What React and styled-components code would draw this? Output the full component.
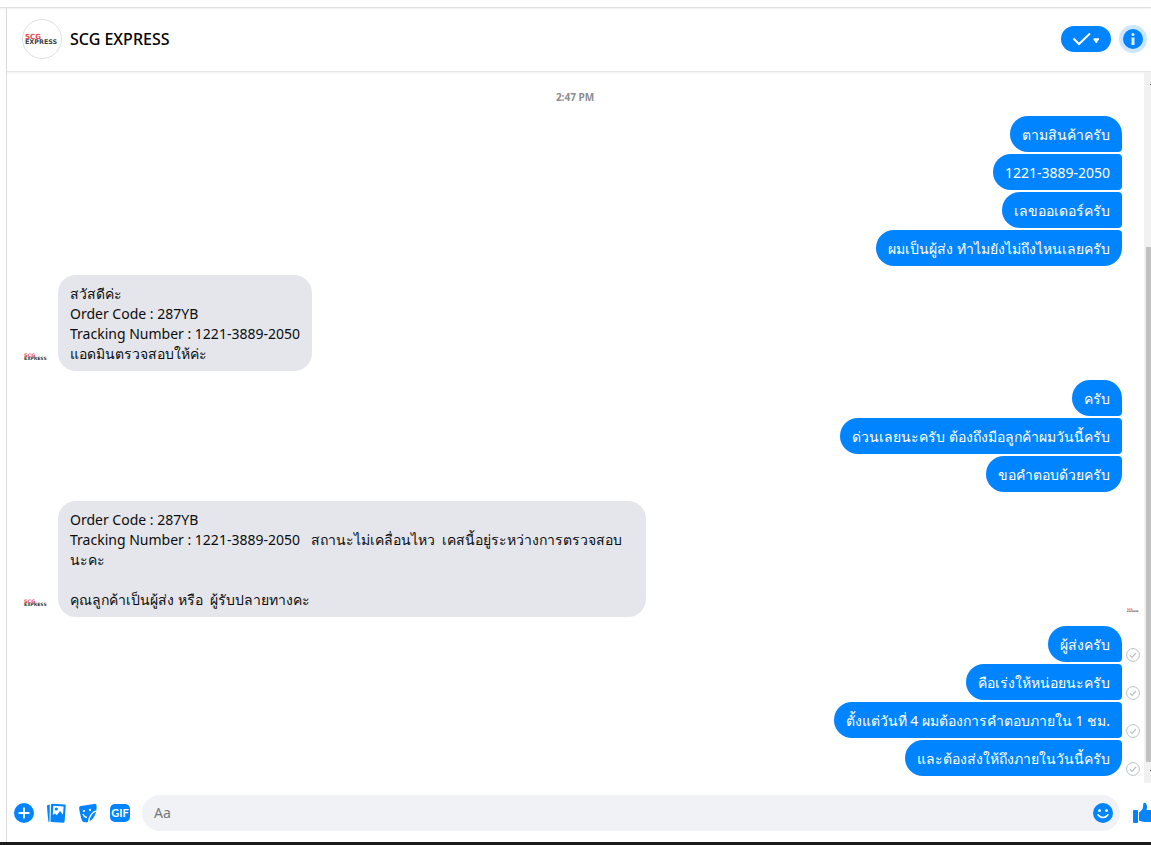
import React, { useState } from 'react'
import styled, { createGlobalStyle } from 'styled-components'

const GlobalStyle = createGlobalStyle`
	* {
		box-sizing: border-box;
	}

	body {
		margin: 0;
		background-color: #ffffff;
		color: #0c0d0e;
		font-family: 'Noto Sans', 'Open Sans', sans-serif;
		font-size: 14px;
	}

	button {
		border: 0;
		padding: 0;
		background: none;
		color: #0084ff;
		cursor: pointer;
	}

	svg {
		display: block;
	}
`

const Page = styled.div`
	min-height: 100vh;
	display: flex;
	flex-direction: column;
	border-bottom: 3px solid #1c1c1c;
`

const TopStrip = styled.div`
	height: 8px;
	border-bottom: 1px solid #e2e2e2;
	box-shadow: 0 1px 2px rgba(0, 0, 0, 0.06);
`

const Chat = styled.main`
	flex: 1;
	display: flex;
	flex-direction: column;
	margin-left: 6px;
	border-left: 1px solid #dddddd;
`

const Header = styled.header`
	height: 64px;
	display: flex;
	align-items: center;
	gap: 8px;
	padding: 0 4px 1px 15px;
	border-bottom: 1px solid #e6e6e6;
	box-shadow: 0 1px 2px rgba(0, 0, 0, 0.06);
`

const Title = styled.h1`
	flex: 1;
	margin: 0;
	color: #000000;
	font-size: 16px;
	font-weight: 500;
`

const DoneButton = styled.button`
	width: 50px;
	height: 26px;
	border-radius: 13px;
	background-color: #0084ff;
`

const InfoButton = styled.button`
	width: 28px;
	height: 28px;
	border-radius: 50%;
`

const Conversation = styled.section`
	flex: 1;
	display: flex;
`

const Messages = styled.div`
	flex: 1;
	display: flex;
	flex-direction: column;
	gap: 9px;
	padding: 15px 0 7px 15px;
`

const Time = styled.time`
	height: 20px;
	margin-right: 16px;
	color: #8a8d91;
	font-size: 10px;
	font-weight: 700;
	line-height: 20px;
	text-align: center;
`

const Group = styled.div`
	display: flex;
	flex-direction: column;
	gap: 2px;
`

const Row = styled.div`
	display: flex;
	align-items: flex-end;
	justify-content: ${({ $sent }) => ($sent ? 'flex-end' : 'flex-start')};
	gap: ${({ $sent }) => ($sent ? '4px' : '8px')};
`

const Bubble = styled.p`
	max-width: 588px;
	margin: 0;
	padding: 9px 12px 7px;
	border-radius: 18px;
	background-color: #e4e6eb;
	line-height: 20px;
	white-space: pre-wrap;
`

const SentBubble = styled(Bubble)`
	border-radius: ${({ $first, $last }) =>
		`18px ${$first ? 18 : 4}px ${$last ? 18 : 4}px 18px`};
	background-color: #0084ff;
	color: #ffffff;
`

const Status = styled.span`
	width: 18px;
	margin-left: ${({ $push }) => ($push ? 'auto' : '0')};
`

const Scrollbar = styled.div`
	width: 7px;
	display: flex;
	flex-direction: column;
	padding: 12px 0;
	background-color: #f1f1f1;

	&::before,
	&::after {
		content: '';
		width: 1px;
		height: 1px;
		align-self: flex-end;
		background-color: #505050;
	}
`

const Thumb = styled.div`
	height: 75%;
	margin: auto 0 8px 2px;
	background-color: #c1c1c1;
`

const Composer = styled.form`
	height: 59px;
	display: flex;
	align-items: center;
	gap: 12px;
	padding-left: 7px;
`

const IconButton = styled.button`
	width: 20px;
	height: 20px;
`

const LikeButton = styled(IconButton)`
	width: 19px;
	height: 22px;
	overflow: hidden;
`

const Field = styled.div`
	flex: 1;
	height: 36px;
	display: flex;
	align-items: center;
	padding: 0 7px 0 12px;
	border-radius: 18px;
	background-color: #f0f2f5;
`

const TextInput = styled.input`
	flex: 1;
	min-width: 0;
	padding: 0;
	border: 0;
	outline: 0;
	background: none;
	font-family: inherit;
	font-size: 14px;

	&::placeholder {
		color: #75787d;
	}
`

const Logo = ({ size, ring }) => (
	<svg width={size} height={size} viewBox='0 0 40 40' role='img' aria-label='SCG Express'>
		{ring && <circle cx='20' cy='20' r='19.5' fill='#fff' stroke='#dedede' />}
		<text y='19.500' fontFamily='DejaVu Sans' fontWeight='bold' fontSize='7' fill='#e8474c'>
			<tspan x='3'>SCG</tspan>
			<tspan x='3' y='24.800' fontSize='6.400' fill='#444'>
				EXPRESS
			</tspan>
		</text>
	</svg>
)

const CheckCaret = () => (
	<svg width='50' height='26' viewBox='0 0 50 26'>
		<path d='M12.5 12.500l5.500 5.500L29 7.500' fill='none' stroke='#fff' strokeWidth='2' />
		<path d='M32.500 12.300h5.500v1l-2.200 3.700h-1.100l-2.200-3.700z' fill='#fff' />
	</svg>
)

const Info = () => (
	<svg width='28' height='28' viewBox='0 0 28 28'>
		<circle cx='14' cy='14' r='14' fill='#cce6ff' />
		<circle cx='14' cy='14' r='10' fill='#0084ff' />
		<circle cx='14' cy='9.500' r='1.500' fill='#e0f0ff' />
		<path d='M12.500 12.500h3v7.500h-3z' fill='#e0f0ff' />
	</svg>
)

const Delivered = () => (
	<svg width='14' height='14' viewBox='0 0 14 14' fill='none' stroke='#bcc0c4'>
		<circle cx='7' cy='7' r='6.400' />
		<path d='M4 7.300l2 2 4-4.300' strokeWidth='1.200' />
	</svg>
)

const Plus = () => (
	<svg width='20' height='20' viewBox='0 0 20 20'>
		<circle cx='10' cy='10' r='10' fill='#0084ff' />
		<path d='M10 4.500v11M4.500 10h11' stroke='#fff' strokeWidth='1.800' />
	</svg>
)

const Photos = () => (
	<svg width='20' height='20' viewBox='0 0 20 20'>
		<path d='M1 2.200l2.800-.8-.3 17.400-1 .2C1.800 13 1.200 8 1 2.200z' fill='#0084ff' />
		<path d='M6.200.8l12.300.8a1.200 1.200 0 0 1 1.200 1.400l-1.100 15.600a1.300 1.300 0 0 1-1.400 1.200l-11.600-.7a1.200 1.200 0 0 1-1.100-1.300L5 2a1.200 1.200 0 0 1 1.200-1.200z' fill='#0084ff' />
		<path d='M7.300 2.800l10.300.7-.6 8.300-3-3.800-3.300 4.300-1.700-1.700-2.200 1.300z' fill='#fff' />
		<circle cx='10.300' cy='6' r='1.600' fill='#0084ff' />
	</svg>
)

const Sticker = () => (
	<svg width='20' height='20' viewBox='0 0 20 20'>
		<path d='M3 3l13-2.100a2.200 2.200 0 0 1 2.600 2.200c0 2.700-.2 5.200-1 7.500-1.200 3.600-3.600 6.900-7.600 8.400-2 .5-4.700.4-6-1.200-1.100-3.500-2.200-7.600-2.800-12A2.300 2.300 0 0 1 3 3z' fill='#0084ff' />
		<path d='M19 7.700c-4 .6-8.200 5.300-8.500 11.800' fill='none' stroke='#fff' strokeWidth='1.400' />
		<path d='M5 11c.6 2 2 3.200 4 3.300' fill='none' stroke='#fff' strokeWidth='1.300' />
		<circle cx='6' cy='8' r='1.100' fill='#fff' />
		<circle cx='12' cy='6.900' r='1.100' fill='#fff' />
	</svg>
)

const Gif = () => (
	<svg width='20' height='20' viewBox='0 0 20 20'>
		<rect y='1' width='20' height='18' rx='5' fill='#0084ff' />
		<text x='10' y='14' fill='#fff' fontFamily='Lato' fontSize='11' fontWeight='700' textAnchor='middle'>
			GIF
		</text>
	</svg>
)

const Smile = () => (
	<svg width='20' height='20' viewBox='0 0 20 20'>
		<circle cx='10' cy='10' r='10' fill='#0084ff' />
		<circle cx='6.500' cy='7.700' r='1.400' fill='#fff' />
		<circle cx='13.500' cy='7.700' r='1.400' fill='#fff' />
		<path d='M5 11.800c2.500 3.600 7.500 3.600 10 0' fill='none' stroke='#fff' strokeWidth='1.600' strokeLinecap='round' />
	</svg>
)

const Like = () => (
	<svg width='24' height='22' viewBox='0 0 24 22' fill='#0084ff'>
		<rect x='1' y='8' width='5' height='13' rx='1' />
		<path d='M7 10.500c2.400-1.400 3.700-3.200 4-5.500l.2-2.700c.1-1.500 2-2 3-.6 1.200 1.800.9 4.200.2 6.300h6.600c2.500 0 2.700 2.600 1.500 3.300 1 1 .7 2.700-.5 3.100.6 1.200 0 2.500-1.200 2.800.3 1.700-.8 2.800-2.300 2.800h-5.500c-2.500 0-4-.9-6-1.500z' />
	</svg>
)

const groups = [
	{
		sent: true,
		texts: [
			'ตามสินค้าครับ',
			'1221-3889-2050',
			'เลขออเดอร์ครับ',
			'ผมเป็นผู้ส่ง ทำไมยังไม่ถึงไหนเลยครับ'
		]
	},
	{
		texts: [
			'สวัสดีค่ะ\nOrder Code : 287YB\nTracking Number : 1221-3889-2050\nแอดมินตรวจสอบให้ค่ะ'
		]
	},
	{
		sent: true,
		texts: [
			'ครับ',
			'ด่วนเลยนะครับ ต้องถึงมือลูกค้าผมวันนี้ครับ',
			'ขอคำตอบด้วยครับ'
		]
	},
	{
		seen: true,
		texts: [
			'Order Code : 287YB\nTracking Number : 1221-3889-2050   สถานะไม่เคลื่อนไหว  เคสนี้อยู่ระหว่างการตรวจสอบนะคะ\n\nคุณลูกค้าเป็นผู้ส่ง หรือ  ผู้รับปลายทางคะ'
		]
	},
	{
		sent: true,
		delivered: true,
		texts: [
			'ผู้ส่งครับ',
			'คือเร่งให้หน่อยนะครับ',
			'ตั้งแต่วันที่ 4 ผมต้องการคำตอบภายใน 1 ชม.',
			'และต้องส่งให้ถึงภายในวันนี้ครับ'
		]
	}
]

const App = () => {
	const [message, setMessage] = useState('')

	return (
		<>
			<GlobalStyle />
			<Page>
				<TopStrip />
				<Chat>
					<Header>
						<Logo size={40} ring />
						<Title>SCG EXPRESS</Title>
						<DoneButton aria-label='Mark as done'>
							<CheckCaret />
						</DoneButton>
						<InfoButton aria-label='Conversation information'>
							<Info />
						</InfoButton>
					</Header>
					<Conversation>
						<Messages>
							<Time>2:47 PM</Time>
							{groups.map(({ sent, seen, delivered, texts }, index) => (
								<Group key={index}>
									{texts.map((text, i) =>
										sent ? (
											<Row key={text} $sent>
												<SentBubble $first={i === 0} $last={i === texts.length - 1}>
													{text}
												</SentBubble>
												<Status>{delivered && <Delivered />}</Status>
											</Row>
										) : (
											<Row key={text}>
												<Logo size={28} />
												<Bubble>{text}</Bubble>
												<Status $push>{seen && <Logo size={14} />}</Status>
											</Row>
										)
									)}
								</Group>
							))}
						</Messages>
						<Scrollbar>
							<Thumb />
						</Scrollbar>
					</Conversation>
					<Composer onSubmit={event => event.preventDefault()}>
						<IconButton type='button' aria-label='More actions'>
							<Plus />
						</IconButton>
						<IconButton type='button' aria-label='Attach a photo'>
							<Photos />
						</IconButton>
						<IconButton type='button' aria-label='Choose a sticker'>
							<Sticker />
						</IconButton>
						<IconButton type='button' aria-label='Choose a GIF'>
							<Gif />
						</IconButton>
						<Field>
							<TextInput
								aria-label='Message'
								placeholder='Aa'
								value={message}
								onChange={event => setMessage(event.target.value)}
							/>
							<IconButton type='button' aria-label='Choose an emoji'>
								<Smile />
							</IconButton>
						</Field>
						<LikeButton type='button' aria-label='Send a like'>
							<Like />
						</LikeButton>
					</Composer>
				</Chat>
			</Page>
		</>
	)
}

export default App
